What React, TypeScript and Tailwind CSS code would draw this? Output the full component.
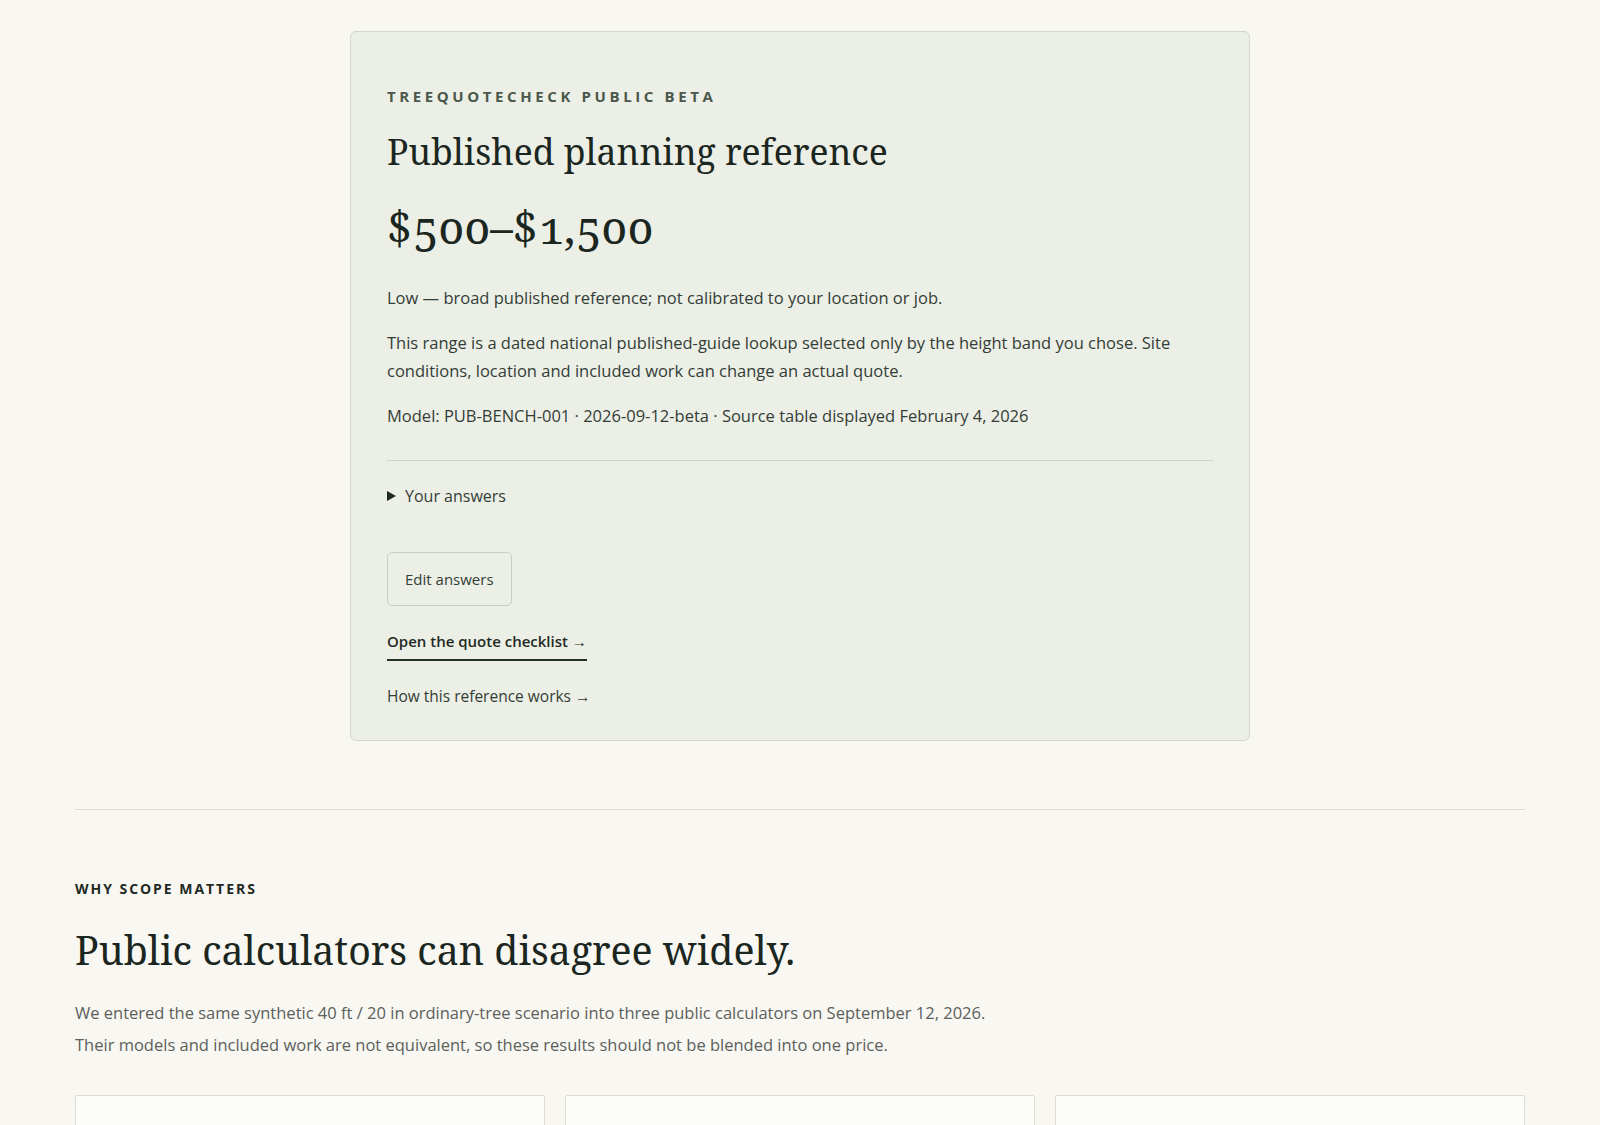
const sans = "font-['Open_Sans',sans-serif]";
const serif = "font-['Noto_Serif','DejaVu_Serif',serif]";

function Triangle() {
  return (
    <svg width="9" height="10" viewBox="0 0 9 10" className="shrink-0">
      <path d="M0 0 L9 5 L0 10 Z" fill="#1f2a23" />
    </svg>
  );
}

function ResultCard() {
  return (
    <section className="mx-auto w-[900px] rounded-[6px] border border-[#d3d7cb] bg-[#ecefe6] px-[36px] pt-[54px] pb-[32px]">
      <p className="text-[15px] leading-[20px] font-bold tracking-[0.24em] text-[#4a584c]">
        TREEQUOTECHECK PUBLIC BETA
      </p>
      <h1 className={`${serif} mt-[24px] text-[35.5px] leading-[42px] text-[#1b2620]`}>
        Published planning reference
      </h1>
      <p className={`${serif} mt-[30px] text-[45px] leading-[50px] text-[#1b2620] oldstyle-nums`}>
        $500–$1,500
      </p>

      <p className="mt-[32px] text-[16.5px] leading-[28px] text-[#333d37]">
        Low — broad published reference; not calibrated to your location or job.
      </p>
      <p className="mt-[17px] text-[16.5px] leading-[28px] text-[#333d37]">
        This range is a dated national published-guide lookup selected only by the height band you chose. Site
        conditions, location and included work can change an actual quote.
      </p>
      <p className="mt-[17px] text-[16.5px] leading-[28px] text-[#333d37]">
        Model: PUB-BENCH-001 · 2026-09-12-beta · Source table displayed February 4, 2026
      </p>

      <div className="mt-[30px] border-t border-[#cfd3c4]" />

      <div className="mt-[21px] flex items-center gap-[9px] text-[16px] leading-[28px] text-[#333d37]">
        <Triangle />
        <span>Your answers</span>
      </div>

      <button className="mt-[42px] rounded-[5px] border border-[#c9cdc1] px-[17px] py-[15px] text-[15px] leading-[22px] text-[#333d37]">
        Edit answers
      </button>

      <div className="mt-[23px]">
        <a className="inline-block border-b-2 border-[#26302a] pb-[6px] text-[15px] leading-[24px] font-semibold text-[#1f2a23]">
          Open the quote checklist →
        </a>
      </div>
      <div className="mt-[23px]">
        <a className="text-[15.5px] leading-[24px] text-[#333d37]">How this reference works →</a>
      </div>
    </section>
  );
}

function ScopeSection() {
  return (
    <section className="mx-[75px] mt-[68px] border-t border-[#dcdcd5] pt-[69px]">
      <p className="text-[14px] leading-[20px] font-bold tracking-[0.14em] text-[#1f2a23]">WHY SCOPE MATTERS</p>
      <h2 className={`${serif} mt-[28px] text-[39.3px] leading-[47px] text-[#1b2620]`}>
        Public calculators can disagree widely.
      </h2>
      <p className="mt-[23px] text-[16.5px] leading-[32px] text-[#5c605b]">
        We entered the same synthetic 40 ft / 20 in ordinary-tree scenario into three public calculators on September 12, 2026.
        <br />
        Their models and included work are not equivalent, so these results should not be blended into one price.
      </p>
      <div className="mt-[34px] grid grid-cols-3 gap-[20px]">
        {[0, 1, 2].map((i) => (
          <div key={i} className="h-[220px] rounded-[2px] border border-[#dcdcd5] bg-[#fcfcf8]" />
        ))}
      </div>
    </section>
  );
}

export default function App() {
  return (
    <div className={`${sans} h-[1125px] overflow-hidden bg-[#f8f7f2] pt-[31px]`}>
      <ResultCard />
      <ScopeSection />
    </div>
  );
}
